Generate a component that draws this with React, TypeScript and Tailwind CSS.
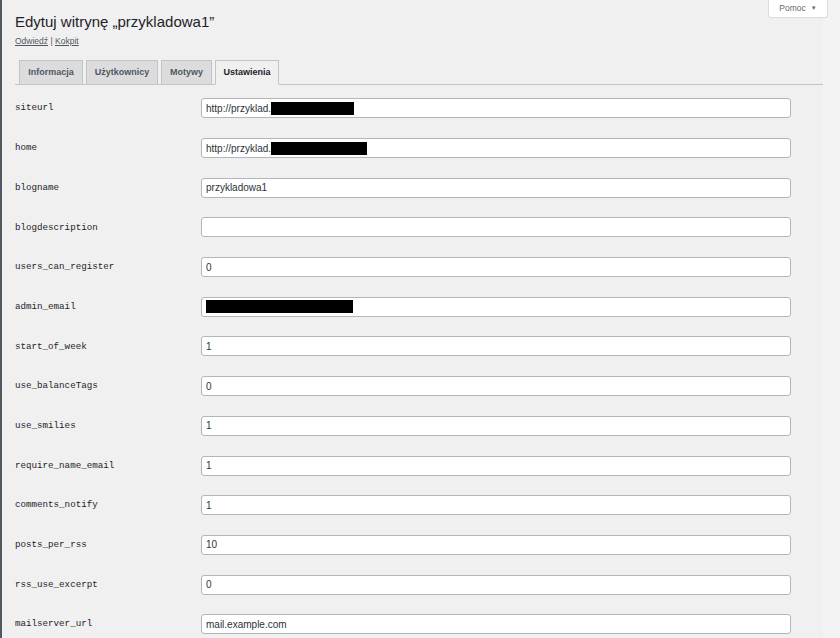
const ROWS: { name: string; value: string; redact?: number; prefix?: string }[] = [
  { name: "siteurl", value: "", prefix: "http://przyklad.", redact: 83 },
  { name: "home", value: "", prefix: "http://przyklad.", redact: 96 },
  { name: "blogname", value: "przykladowa1" },
  { name: "blogdescription", value: "" },
  { name: "users_can_register", value: "0" },
  { name: "admin_email", value: "", redact: 147 },
  { name: "start_of_week", value: "1" },
  { name: "use_balanceTags", value: "0" },
  { name: "use_smilies", value: "1" },
  { name: "require_name_email", value: "1" },
  { name: "comments_notify", value: "1" },
  { name: "posts_per_rss", value: "10" },
  { name: "rss_use_excerpt", value: "0" },
  { name: "mailserver_url", value: "mail.example.com" },
];

const TABS = [
  { label: "Informacja", w: "w-[64px]" },
  { label: "Użytkownicy", w: "w-[72px]" },
  { label: "Motywy", w: "w-[51px]" },
  { label: "Ustawienia", w: "w-[64px]", active: true },
];

export default function App() {
  return (
    <div className="flex h-[638px] w-[840px] overflow-hidden bg-[#f0f0f1] font-['Liberation_Sans',Arial,sans-serif] text-[#1d2327]">
      <div className="w-[2px] shrink-0 bg-[#50575e]" />
      <div className="flex min-w-0 flex-1 flex-col pl-[13px]">
        <div className="flex items-start justify-between">
          <div className="pt-[12px]">
            <h1 className="text-[15px] leading-[19px] font-normal">Edytuj witrynę „przykladowa1”</h1>
            <p className="mt-[4px] text-[8.5px] leading-[12px] text-[#50575e]">
              <a className="underline">Odwiedź</a> | <a className="underline">Kokpit</a>
            </p>
          </div>
          <button
            type="button"
            className="relative z-10 mr-[-5px] flex h-[18px] w-[60px] items-center justify-center gap-[5px] rounded-b-[3px] border border-t-0 border-[#dcdcde] bg-white text-[8.5px] text-[#646970]"
          >
            Pomoc <span className="text-[6px]">▼</span>
          </button>
        </div>

        <div className="mt-[13px] flex gap-[3px] border-b border-[#c3c4c7] pl-[4px]">
          {TABS.map((t) => (
            <div
              key={t.label}
              className={`${t.w} mb-[-1px] flex h-[25px] items-center justify-center border border-[#c3c4c7] text-[9px] font-bold ${
                t.active ? "border-b-[#f0f0f1] bg-[#f0f0f1] text-[#1d2327]" : "bg-[#dcdcde] text-[#50575e]"
              }`}
            >
              {t.label}
            </div>
          ))}
        </div>

        <div className="mt-[3.5px] flex flex-col">
          {ROWS.map((r) => (
            <div key={r.name} className="flex h-[39.7px] items-center">
              <label className="w-[186px] shrink-0 font-['Liberation_Mono','DejaVu_Sans_Mono',monospace] text-[9.2px] text-[#1d2327]">
                {r.name}
              </label>
              <div className="flex h-[20px] w-[590px] items-center rounded-[3px] border border-[#b4b6b9] bg-white px-[4px] text-[10px] text-[#2c3338]">
                {r.prefix}
                {r.value}
                {r.redact ? (
                  <span className="inline-block h-[13px] bg-black" style={{ width: r.redact }} />
                ) : null}
              </div>
            </div>
          ))}
        </div>
      </div>
      <div className="w-[17px] shrink-0 bg-[#f3f3f3]" />
    </div>
  );
}
